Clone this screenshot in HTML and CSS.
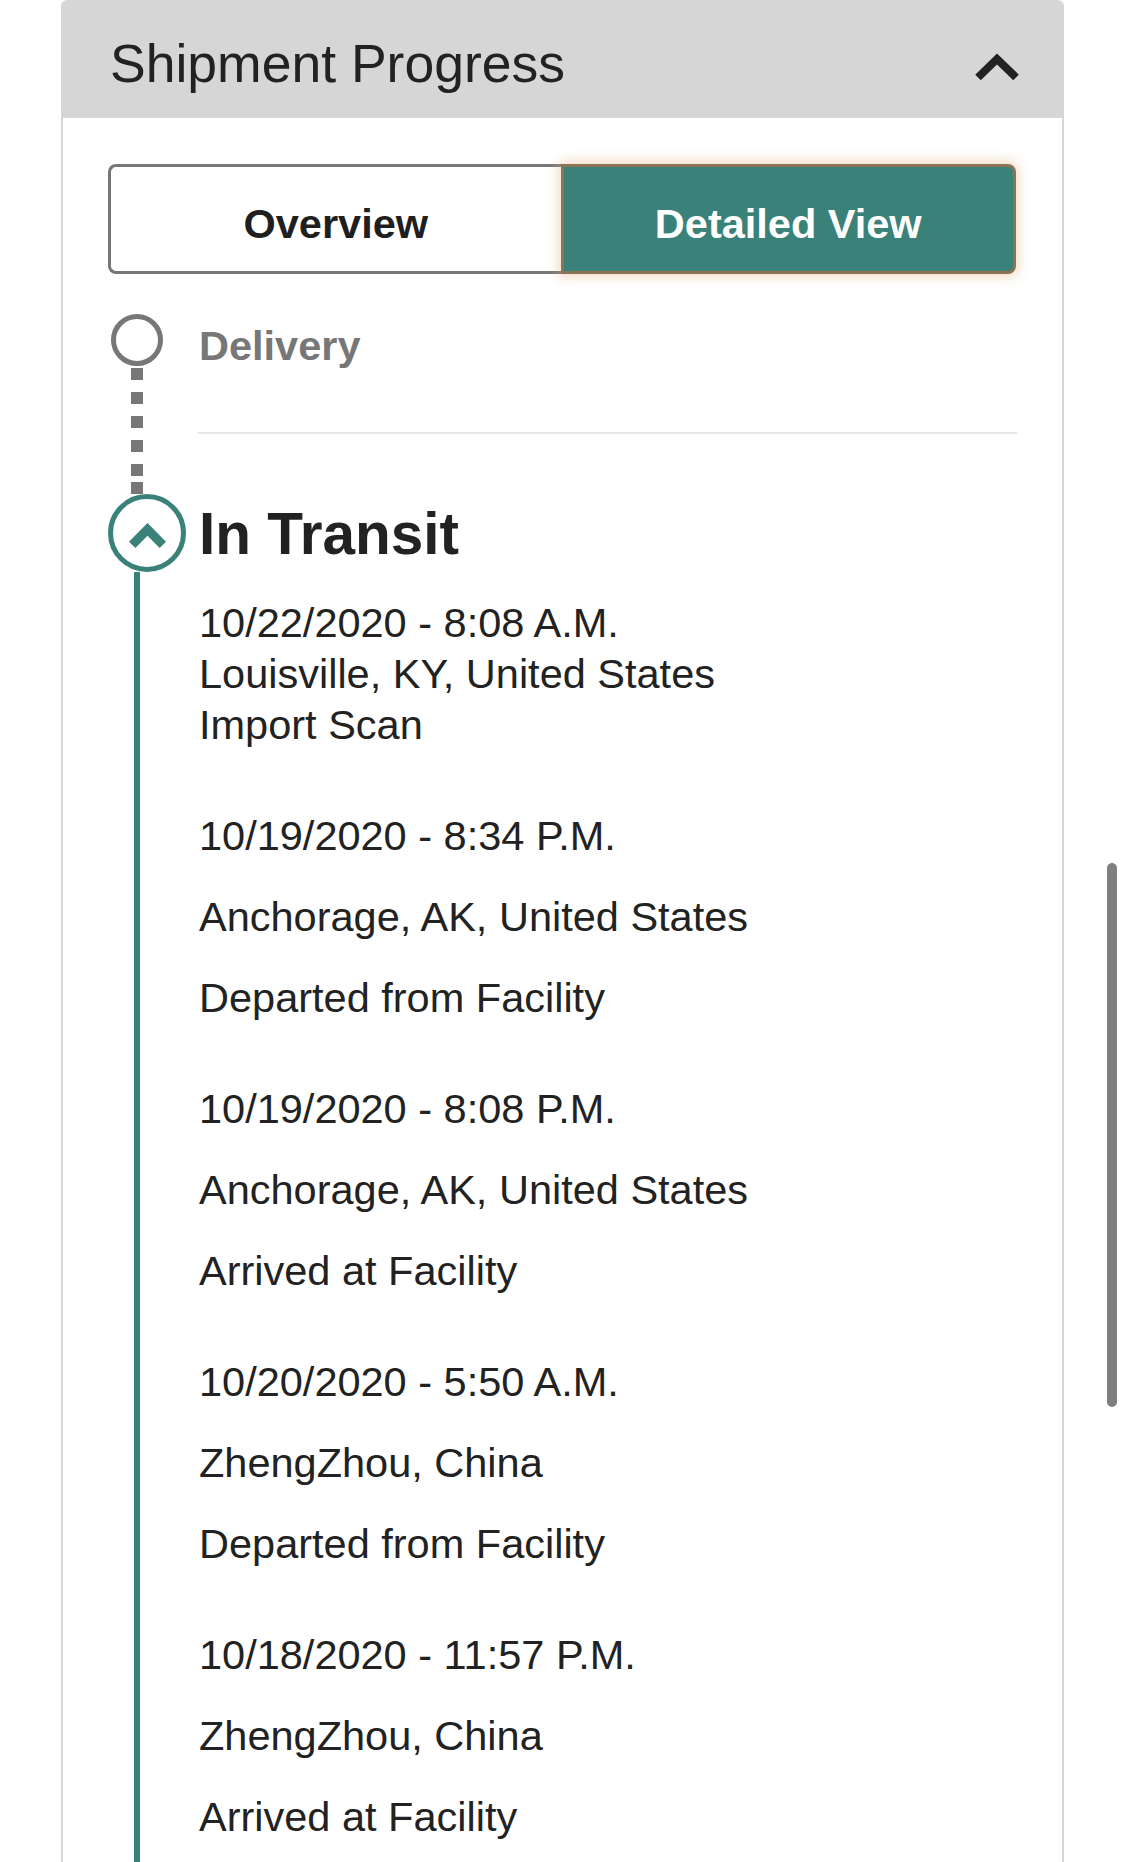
FILE: index.html
```html
<!DOCTYPE html>
<html lang="en">
<head>
<meta charset="utf-8">
<title>Shipment Progress</title>
<link rel="stylesheet" href="styles.css">
</head>
<body>
<div class="page">
  <section class="card">
    <header class="card-header">
      <h1 class="card-title">Shipment Progress</h1>
      <svg class="collapse-icon" viewBox="0 0 54 34" width="54" height="34" aria-hidden="true">
        <polyline points="8,27.5 27,9 46,27.5" fill="none" stroke="#222" stroke-width="8" stroke-linejoin="miter" stroke-linecap="butt"/>
      </svg>
    </header>
    <div class="card-body">
      <div class="toggle">
        <button class="tab tab-overview" type="button">Overview</button>
        <button class="tab tab-active" type="button">Detailed View</button>
      </div>
      <div class="timeline">
        <div class="step">
          <div class="rail">
            <svg class="marker-pending" viewBox="0 0 52 52" width="52" height="52" aria-hidden="true">
              <circle cx="26" cy="26" r="23.5" fill="none" stroke="#777" stroke-width="5"/>
            </svg>
            <div class="connector-dotted"></div>
          </div>
          <div class="step-content-pending">
            <div class="step-label-pending">Delivery</div>
            <div class="separator"></div>
          </div>
        </div>
        <div class="step">
          <div class="rail">
            <svg class="marker-current" viewBox="0 0 78 78" width="78" height="78" aria-hidden="true">
              <circle cx="39" cy="39" r="36.5" fill="#fff" stroke="#3a8279" stroke-width="5"/>
              <polyline points="24.2,50.8 39.5,35.4 54.8,50.8" fill="none" stroke="#3a8279" stroke-width="9" stroke-linejoin="miter" stroke-linecap="butt"/>
            </svg>
            <div class="connector-solid"></div>
          </div>
          <div class="step-content-current">
            <h2 class="step-title">In Transit</h2>
            <div class="event event-first">
              <p class="event-line">10/22/2020 - 8:08 A.M.</p>
              <p class="event-line">Louisville, KY, United States</p>
              <p class="event-line">Import Scan</p>
            </div>
            <div class="event event-spaced">
              <p class="event-line">10/19/2020 - 8:34 P.M.</p>
              <p class="event-line">Anchorage, AK, United States</p>
              <p class="event-line">Departed from Facility</p>
            </div>
            <div class="event event-spaced">
              <p class="event-line">10/19/2020 - 8:08 P.M.</p>
              <p class="event-line">Anchorage, AK, United States</p>
              <p class="event-line">Arrived at Facility</p>
            </div>
            <div class="event event-spaced">
              <p class="event-line">10/20/2020 - 5:50 A.M.</p>
              <p class="event-line">ZhengZhou, China</p>
              <p class="event-line">Departed from Facility</p>
            </div>
            <div class="event event-spaced">
              <p class="event-line">10/18/2020 - 11:57 P.M.</p>
              <p class="event-line">ZhengZhou, China</p>
              <p class="event-line">Arrived at Facility</p>
            </div>
          </div>
        </div>
      </div>
    </div>
  </section>
  <div class="scroll-indicator"></div>
</div>
</body>
</html>
```

FILE: styles.css
```css
html, body {
  margin: 0;
  padding: 0;
  background: #fff;
}

body {
  font-family: "Liberation Sans", Arial, Helvetica, sans-serif;
  color: #222;
}

.page {
  position: relative;
  width: 1125px;
  height: 1862px;
  overflow: hidden;
}

.card {
  margin-left: 61px;
  width: 1003px;
  box-sizing: border-box;
  border-left: 2px solid #d6d6d6;
  border-right: 2px solid #d6d6d6;
  border-radius: 6px 6px 0 0;
  min-height: 2000px;
}

.card-header {
  display: flex;
  align-items: flex-start;
  height: 118px;
  box-sizing: border-box;
  padding: 33px 38px 0 47px;
  background: #d6d6d6;
  border-radius: 5px 5px 0 0;
}

.card-title {
  margin: 0;
  font-size: 53.5px;
  line-height: 62px;
  font-weight: 400;
  color: #222;
}

.collapse-icon {
  margin-left: auto;
  margin-top: 17px;
  flex: none;
}

.card-body {
  padding: 46px 46px 0 45px;
}

.toggle {
  display: flex;
  height: 110px;
}

.tab {
  flex: 1 1 0;
  box-sizing: border-box;
  display: flex;
  align-items: center;
  justify-content: center;
  margin: 0;
  padding: 9px 0 0;
  font-family: "Liberation Sans", Arial, Helvetica, sans-serif;
  font-size: 41.5px;
  line-height: 50px;
  font-weight: 700;
  cursor: pointer;
}

.tab-overview {
  background: #fff;
  color: #1f1f1f;
  border: 3px solid #777;
  border-right: none;
  border-radius: 8px 0 0 8px;
}

.tab-active {
  background: #3a8279;
  color: #fff;
  border: 3px solid #8c7355;
  border-radius: 0 8px 8px 0;
  box-shadow: 0 0 12px 3px rgba(226, 178, 128, 0.45);
}

.timeline {
  margin-top: 40px;
}

.step {
  display: grid;
  grid-template-columns: 91px 1fr;
}

.rail {
  display: flex;
  flex-direction: column;
}

.marker-pending {
  flex: none;
  margin-left: 3px;
}

.connector-dotted {
  flex: 1;
  width: 12px;
  margin-left: 23px;
  margin-top: 2px;
  background:
    linear-gradient(#777, #777) bottom / 12px 12px no-repeat,
    repeating-linear-gradient(to bottom, #777 0 12px, transparent 12px 24px);
}

.step-content-pending {
  padding: 6px 0 60px;
}

.step-label-pending {
  font-size: 41.5px;
  line-height: 51px;
  font-weight: 700;
  color: #777;
}

.separator {
  margin: 61px -1px 0 -1px;
  height: 2px;
  background: #e6e6e6;
}

.marker-current {
  flex: none;
}

.connector-solid {
  flex: 1;
  width: 6px;
  margin-left: 26px;
  background: #3a8279;
}

.step-content-current {
  padding: 5px 0 200px;
}

.step-title {
  margin: 0;
  font-size: 58.5px;
  line-height: 70px;
  font-weight: 700;
  color: #222;
}

.event {
  margin-top: 60px;
  font-size: 41.5px;
  line-height: 51px;
  color: #222;
}

.event-first {
  margin-top: 28px;
}

.event-line {
  margin: 0;
}

.event-spaced .event-line + .event-line {
  margin-top: 30px;
}

.scroll-indicator {
  position: absolute;
  right: 8px;
  top: 863px;
  width: 10px;
  height: 544px;
  border-radius: 5px;
  background: #7f7f7f;
}
```
